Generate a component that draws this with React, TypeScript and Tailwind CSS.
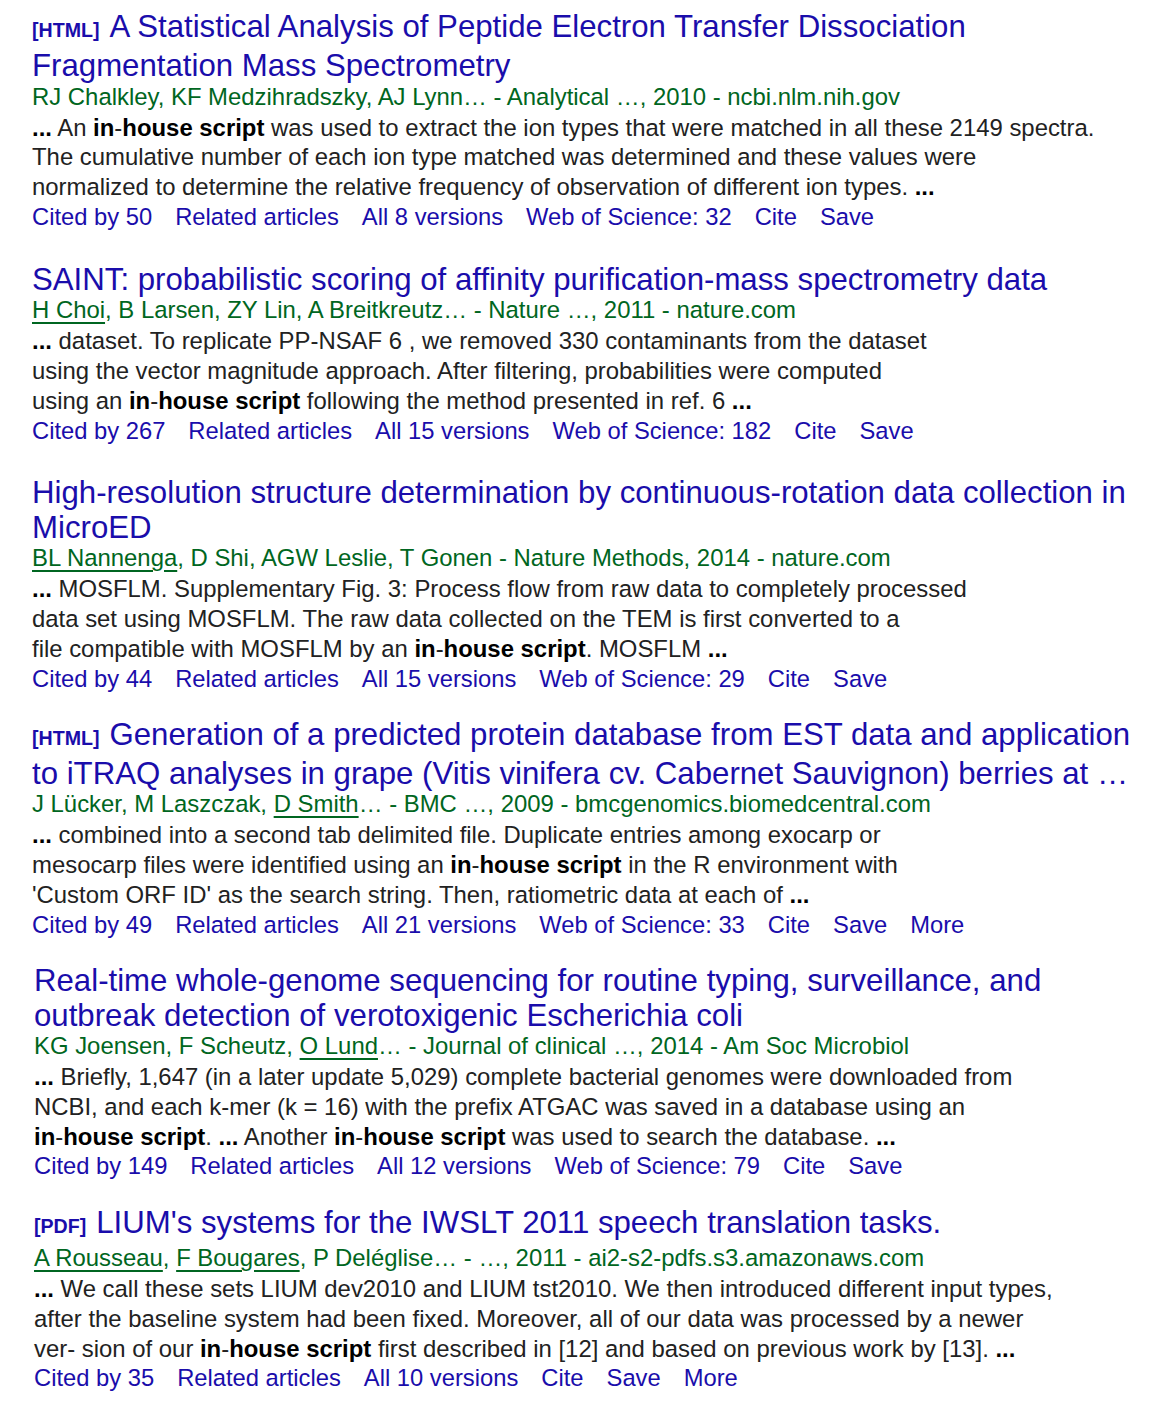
import type { ReactNode } from 'react'

interface Result {
  tag?: string
  title: string[]
  authors: ReactNode
  snippet: ReactNode[]
  links: string[]
  mt: string
  ml: string
}

const B = ({ children }: { children: ReactNode }) => <b className="font-bold text-black">{children}</b>

const Au = ({ children }: { children: ReactNode }) => (
  <span className="underline decoration-[2px] underline-offset-[4px]">{children}</span>
)

const IHS = () => (
  <>
    <B>in</B>-<B>house script</B>
  </>
)

const results: Result[] = [
  {
    tag: '[HTML]',
    title: ['A Statistical Analysis of Peptide Electron Transfer Dissociation', 'Fragmentation Mass Spectrometry'],
    authors: <>RJ Chalkley, KF Medzihradszky, AJ Lynn… - Analytical …, 2010 - ncbi.nlm.nih.gov</>,
    snippet: [
      <>
        <B>...</B> An <IHS /> was used to extract the ion types that were matched in all these 2149 spectra.
      </>,
      <>The cumulative number of each ion type matched was determined and these values were</>,
      <>
        normalized to determine the relative frequency of observation of different ion types. <B>...</B>
      </>,
    ],
    links: ['Cited by 50', 'Related articles', 'All 8 versions', 'Web of Science: 32', 'Cite', 'Save'],
    mt: 'mt-[9px]',
    ml: 'ml-[32px]',
  },
  {
    title: ['SAINT: probabilistic scoring of affinity purification-mass spectrometry data'],
    authors: (
      <>
        <Au>H Choi</Au>, B Larsen, ZY Lin, A Breitkreutz… - Nature …, 2011 - nature.com
      </>
    ),
    snippet: [
      <>
        <B>...</B> dataset. To replicate PP-NSAF 6 , we removed 330 contaminants from the dataset
      </>,
      <>using the vector magnitude approach. After filtering, probabilities were computed</>,
      <>
        using an <IHS /> following the method presented in ref. 6 <B>...</B>
      </>,
    ],
    links: ['Cited by 267', 'Related articles', 'All 15 versions', 'Web of Science: 182', 'Cite', 'Save'],
    mt: 'mt-[30px]',
    ml: 'ml-[32px]',
  },
  {
    title: ['High-resolution structure determination by continuous-rotation data collection in', 'MicroED'],
    authors: (
      <>
        <Au>BL Nannenga</Au>, D Shi, AGW Leslie, T Gonen - Nature Methods, 2014 - nature.com
      </>
    ),
    snippet: [
      <>
        <B>...</B> MOSFLM. Supplementary Fig. 3: Process flow from raw data to completely processed
      </>,
      <>data set using MOSFLM. The raw data collected on the TEM is first converted to a</>,
      <>
        file compatible with MOSFLM by an <IHS />. MOSFLM <B>...</B>
      </>,
    ],
    links: ['Cited by 44', 'Related articles', 'All 15 versions', 'Web of Science: 29', 'Cite', 'Save'],
    mt: 'mt-[29px]',
    ml: 'ml-[32px]',
  },
  {
    tag: '[HTML]',
    title: [
      'Generation of a predicted protein database from EST data and application',
      'to iTRAQ analyses in grape (Vitis vinifera cv. Cabernet Sauvignon) berries at …',
    ],
    authors: (
      <>
        J Lücker, M Laszczak, <Au>D Smith</Au>… - BMC …, 2009 - bmcgenomics.biomedcentral.com
      </>
    ),
    snippet: [
      <>
        <B>...</B> combined into a second tab delimited file. Duplicate entries among exocarp or
      </>,
      <>
        mesocarp files were identified using an <IHS /> in the R environment with
      </>,
      <>
        'Custom ORF ID' as the search string. Then, ratiometric data at each of <B>...</B>
      </>,
    ],
    links: ['Cited by 49', 'Related articles', 'All 21 versions', 'Web of Science: 33', 'Cite', 'Save', 'More'],
    mt: 'mt-[23px]',
    ml: 'ml-[32px]',
  },
  {
    title: [
      'Real-time whole-genome sequencing for routine typing, surveillance, and',
      'outbreak detection of verotoxigenic Escherichia coli',
    ],
    authors: (
      <>
        KG Joensen, F Scheutz, <Au>O Lund</Au>… - Journal of clinical …, 2014 - Am Soc Microbiol
      </>
    ),
    snippet: [
      <>
        <B>...</B> Briefly, 1,647 (in a later update 5,029) complete bacterial genomes were downloaded from
      </>,
      <>NCBI, and each k-mer (k = 16) with the prefix ATGAC was saved in a database using an</>,
      <>
        <IHS />. <B>...</B> Another <IHS /> was used to search the database. <B>...</B>
      </>,
    ],
    links: ['Cited by 149', 'Related articles', 'All 12 versions', 'Web of Science: 79', 'Cite', 'Save'],
    mt: 'mt-[23px]',
    ml: 'ml-[34px]',
  },
  {
    tag: '[PDF]',
    title: ["LIUM's systems for the IWSLT 2011 speech translation tasks."],
    authors: (
      <>
        <Au>A Rousseau</Au>, <Au>F Bougares</Au>, P Deléglise… - …, 2011 - ai2-s2-pdfs.s3.amazonaws.com
      </>
    ),
    snippet: [
      <>
        <B>...</B> We call these sets LIUM dev2010 and LIUM tst2010. We then introduced different input types,
      </>,
      <>after the baseline system had been fixed. Moreover, all of our data was processed by a newer</>,
      <>
        ver- sion of our <IHS /> first described in [12] and based on previous work by [13]. <B>...</B>
      </>,
    ],
    links: ['Cited by 35', 'Related articles', 'All 10 versions', 'Cite', 'Save', 'More'],
    mt: 'mt-[24px]',
    ml: 'ml-[34px]',
  },
]

function ResultItem({ r }: { r: Result }) {
  return (
    <div className={`${r.mt} ${r.ml}`}>
      <div className="text-[31.2px] leading-[35px] text-[#1a0dab]">
        {r.title.map((line, i) => (
          <div key={i} className="whitespace-nowrap">
            {i === 0 && r.tag && <span className="mr-[10px] text-[19.6px] font-bold">{r.tag}</span>}
            {line}
          </div>
        ))}
      </div>
      <div className="-mt-[1.5px] whitespace-nowrap text-[23.9px] leading-[30px] text-[#006621]">{r.authors}</div>
      <div className="mt-[1px] text-[23.9px] leading-[29.8px] text-[#222222]">
        {r.snippet.map((line, i) => (
          <div key={i} className="whitespace-nowrap">
            {line}
          </div>
        ))}
      </div>
      <div className="flex gap-[23px] whitespace-nowrap text-[23.76px] leading-[30px] text-[#1a0dab]">
        {r.links.map((l) => (
          <span key={l}>{l}</span>
        ))}
      </div>
    </div>
  )
}

export default function App() {
  return (
    <div className="min-h-[1408px] w-[1163px] bg-white pb-4" style={{ fontFamily: '"Liberation Sans", Arial, sans-serif' }}>
      {results.map((r, i) => (
        <ResultItem key={i} r={r} />
      ))}
    </div>
  )
}
